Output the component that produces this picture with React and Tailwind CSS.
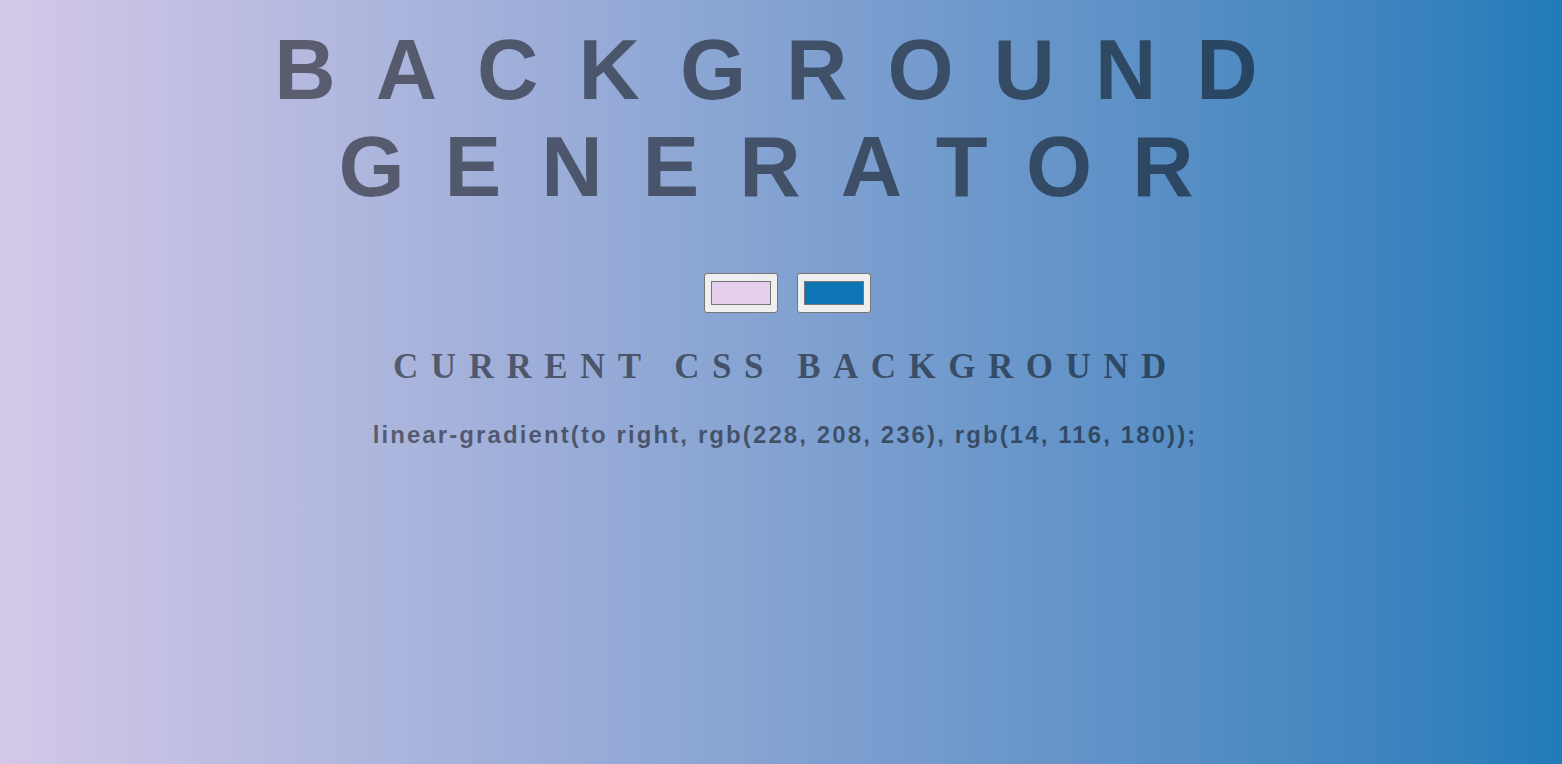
export default function App() {
  const from = "rgb(228, 208, 236)";
  const to = "rgb(14, 116, 180)";

  return (
    <div className="min-h-screen w-full bg-linear-to-r from-[#d4c8e8] to-[#207bb9] text-center text-black/50">
      <h1 className="pt-[21px] pl-[10px] text-[85px] leading-[97px] font-bold tracking-[40px] font-['Liberation_Sans',Arial,sans-serif]">
        BACKGROUND GENERATOR
      </h1>

      <div className="mt-[58px] flex justify-center gap-[19px] pl-[12px]">
        <ColorBox color="#e4d0ec" />
        <ColorBox color="#0e74b4" />
      </div>

      <h3 className="mt-[34px] pl-[10px] text-[35px] leading-[40px] font-bold tracking-[12.5px] font-['Liberation_Serif','Times_New_Roman',serif]">
        CURRENT CSS BACKGROUND
      </h3>

      <p className="mt-[34px] pl-[8px] text-[24px] leading-[28px] font-bold tracking-[2.1px] font-['Liberation_Sans',Arial,sans-serif]">
        linear-gradient(to right, {from}, {to});
      </p>
    </div>
  );
}

function ColorBox({ color }) {
  return (
    <div className="w-[74px] h-[40px] rounded-[3px] border border-[#767676] bg-[#efefef] px-[6px] py-[7px]">
      <div className="h-full w-full border border-[#777]" style={{ backgroundColor: color }} />
    </div>
  );
}
